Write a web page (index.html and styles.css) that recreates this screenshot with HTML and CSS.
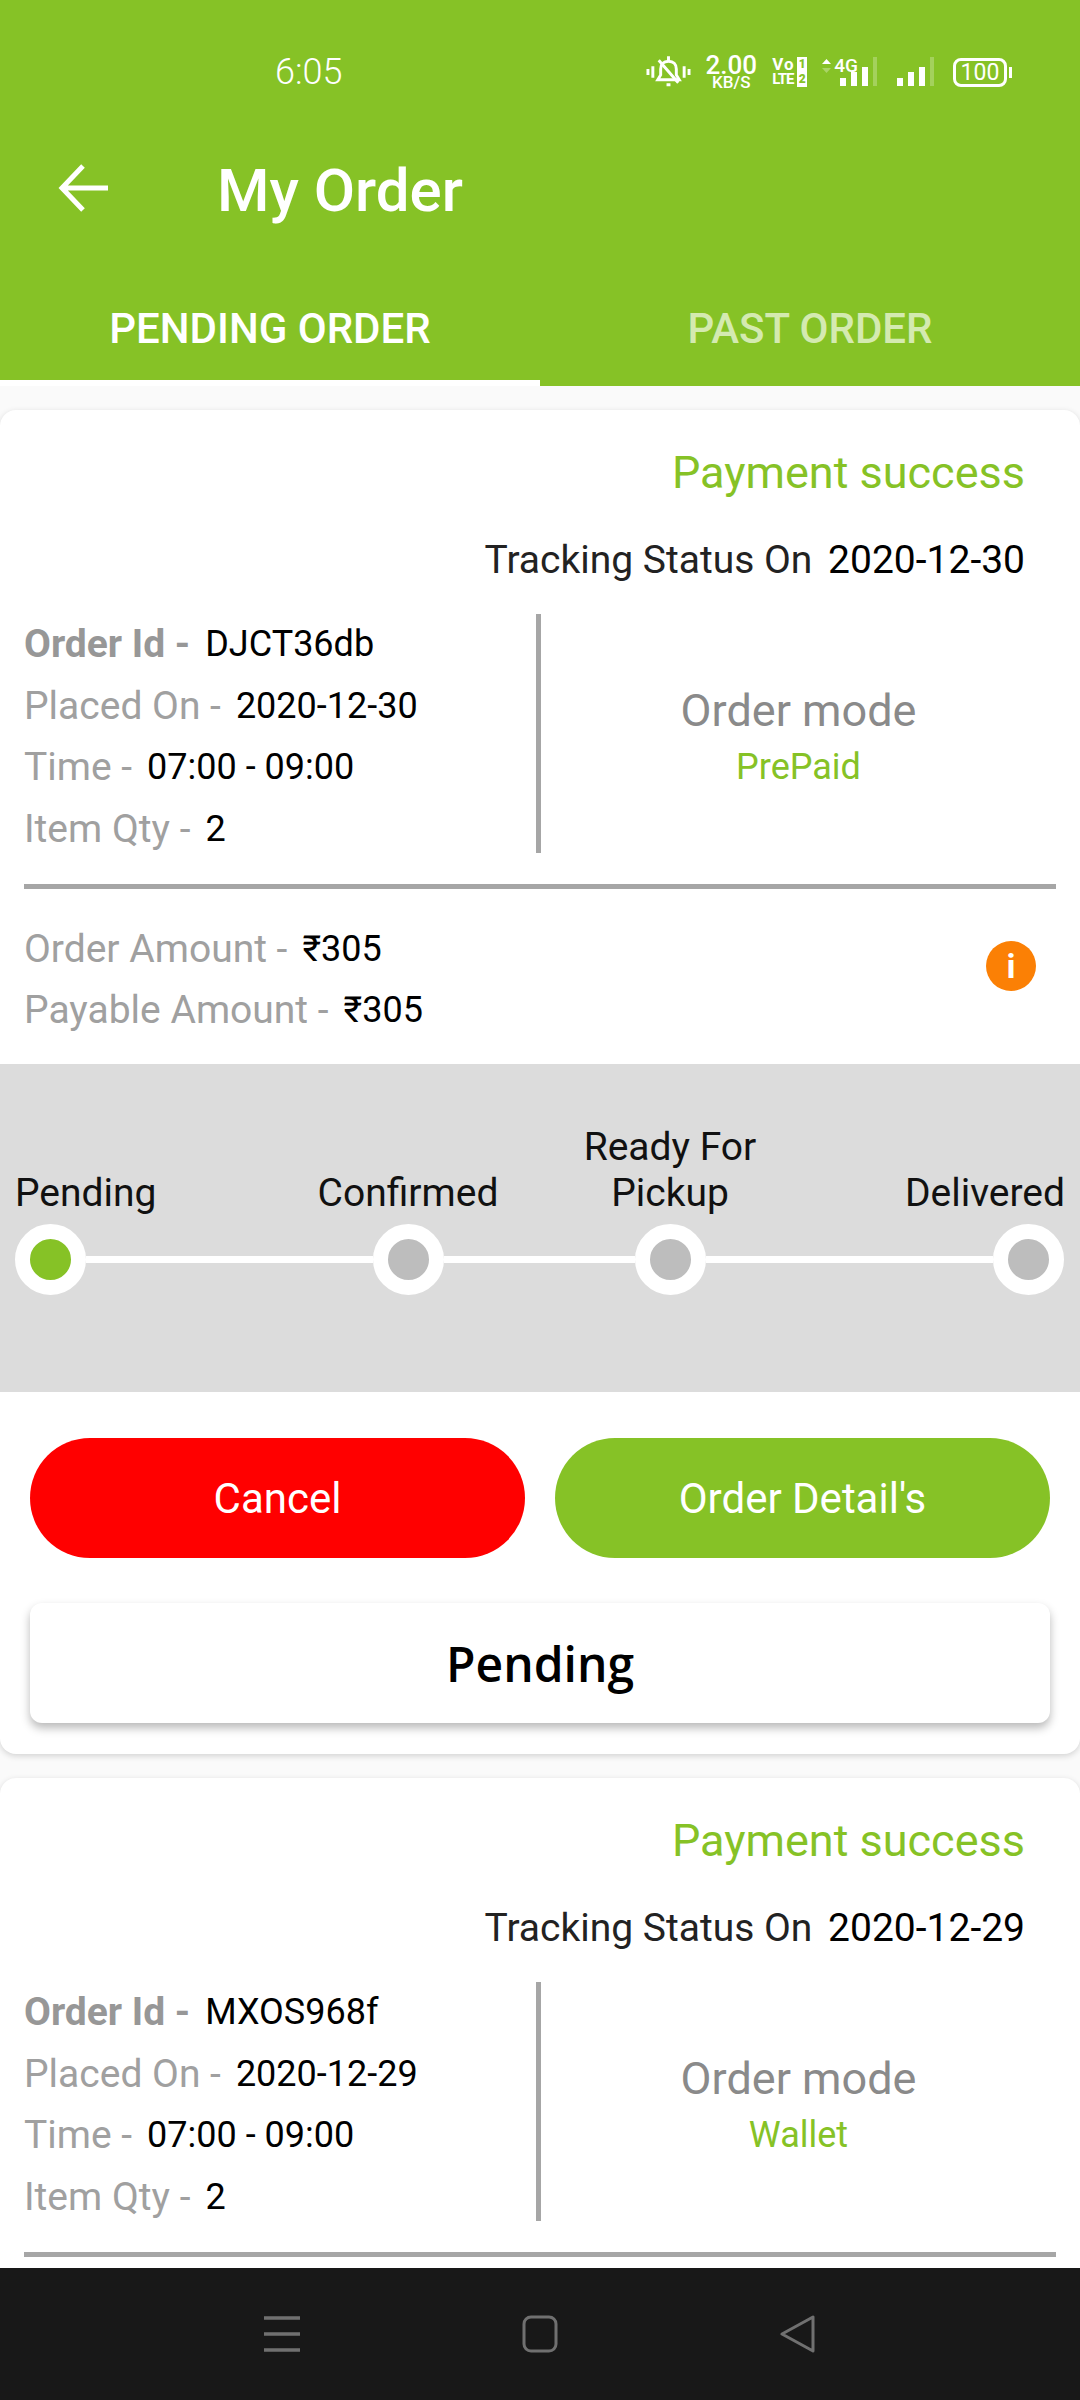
FILE: index.html
```html
<!DOCTYPE html>
<html lang="en">
<head>
    <meta charset="UTF-8">
    <meta name="viewport" content="width=device-width, initial-scale=1.0">
    <title>My Order</title>
    <link rel="stylesheet" href="styles.css">
</head>
<body>
    <header class="app-header">
        <div class="status-bar">
            <span class="clock">6:05</span>
            <div class="status-icons">
                <svg class="bell" width="45" height="32" viewBox="0 0 46 32" fill="none" stroke="#fff" stroke-width="3">
                    <path d="M2 13v6M7 10v12M39 10v12M44 13v6"/>
                    <path d="M12 24h22l-3-5v-6c0-5-3-8-8-8s-8 3-8 8v6z"/>
                    <path d="M23 0v5M21 29h4M13 4l20 23"/>
                </svg>
                <div class="net-speed">
                    <span class="net-value">2.00</span>
                    <span class="net-unit">KB/S</span>
                </div>
                <div class="volte">
                    <div class="volte-row"><span class="volte-vo">Vo</span><b>1</b></div>
                    <div class="volte-row"><span>LTE</span><b>2</b></div>
                </div>
                <div class="signal-first">
                    <svg class="net-arrow" width="9" height="14" viewBox="0 0 9 14" fill="#fff">
                        <path d="M4.5 0L9 5H0z"/>
                        <path d="M4.5 14L9 9H0z" opacity=".3"/>
                    </svg>
                    <span class="net-type">4G</span>
                    <svg width="38" height="30" viewBox="0 0 38 30" fill="#fff">
                        <path d="M0 21h6v8H0zM11 15h6v14h-6zM22 10h6v19h-6z"/>
                        <path d="M33 0h4v29h-4z" opacity=".25"/>
                    </svg>
                </div>
                <svg class="signal" width="38" height="30" viewBox="0 0 38 30" fill="#fff">
                    <path d="M0 21h6v8H0zM11 15h6v14h-6zM22 10h6v19h-6z"/>
                    <path d="M33 0h4v29h-4z" opacity=".25"/>
                </svg>
                <div class="battery">
                    <span class="battery-body">100</span>
                    <span class="battery-tip"></span>
                </div>
            </div>
        </div>
        <div class="toolbar">
            <svg class="back-icon" width="50" height="48" viewBox="0 0 50 48" fill="none" stroke="#fff" stroke-width="5">
                <path d="M50 24H5M25 2L4 24l21 22"/>
            </svg>
            <h1>My Order</h1>
        </div>
        <div class="tabs">
            <div class="tab active">PENDING ORDER</div>
            <div class="tab">PAST ORDER</div>
        </div>
    </header>

    <main class="order-list">
        <section class="order-card">
            <div class="payment-status">Payment success</div>
            <div class="tracking">Tracking Status On <span>2020-12-30</span></div>
            <div class="order-info">
                <div class="order-rows">
                    <div class="row"><span class="label strong">Order Id -</span><span class="value">DJCT36db</span></div>
                    <div class="row"><span class="label">Placed On -</span><span class="value">2020-12-30</span></div>
                    <div class="row"><span class="label">Time -</span><span class="value">07:00 - 09:00</span></div>
                    <div class="row"><span class="label">Item Qty -</span><span class="value">2</span></div>
                </div>
                <div class="order-mode">
                    <div class="mode-title">Order mode</div>
                    <div class="mode-value">PrePaid</div>
                </div>
            </div>
            <div class="amounts">
                <div>
                    <div class="row"><span class="label">Order Amount -</span><span class="value">₹305</span></div>
                    <div class="row"><span class="label">Payable Amount -</span><span class="value">₹305</span></div>
                </div>
                <div class="info-badge">i</div>
            </div>
            <div class="stepper">
                <div class="step-labels">
                    <span class="step-first">Pending</span>
                    <span>Confirmed</span>
                    <span>Ready For<br>Pickup</span>
                    <span class="step-last">Delivered</span>
                </div>
                <div class="rail">
                    <span class="node done"></span>
                    <span class="line line-long"></span>
                    <span class="node"></span>
                    <span class="line line-short"></span>
                    <span class="node"></span>
                    <span class="line line-long"></span>
                    <span class="node"></span>
                </div>
            </div>
            <div class="actions">
                <button class="btn btn-cancel">Cancel</button>
                <button class="btn btn-details">Order Detail's</button>
            </div>
            <div class="state-box">Pending</div>
        </section>

        <section class="order-card">
            <div class="payment-status">Payment success</div>
            <div class="tracking">Tracking Status On <span>2020-12-29</span></div>
            <div class="order-info">
                <div class="order-rows">
                    <div class="row"><span class="label strong">Order Id -</span><span class="value">MXOS968f</span></div>
                    <div class="row"><span class="label">Placed On -</span><span class="value">2020-12-29</span></div>
                    <div class="row"><span class="label">Time -</span><span class="value">07:00 - 09:00</span></div>
                    <div class="row"><span class="label">Item Qty -</span><span class="value">2</span></div>
                </div>
                <div class="order-mode">
                    <div class="mode-title">Order mode</div>
                    <div class="mode-value">Wallet</div>
                </div>
            </div>
            <div class="amounts"></div>
        </section>
    </main>

    <nav class="nav-bar">
        <svg width="40" height="38" viewBox="0 0 40 38" fill="none" stroke="#707070" stroke-width="3.5">
            <path d="M2 3h36M2 19h36M2 35h36"/>
        </svg>
        <svg width="40" height="38" viewBox="0 0 40 38" fill="none" stroke="#707070" stroke-width="3">
            <rect x="4" y="2" width="32" height="34" rx="7"/>
        </svg>
        <svg width="40" height="38" viewBox="0 0 40 38" fill="none" stroke="#707070" stroke-width="3" stroke-linejoin="round">
            <path d="M35 2v34L4 19z"/>
        </svg>
    </nav>
</body>
</html>
```

FILE: styles.css
```css
* {
    box-sizing: border-box;
}
body {
    margin: 0;
    height: 2400px;
    display: flex;
    flex-direction: column;
    overflow: hidden;
    background-color: #fafafa;
    font-family: Roboto, "Liberation Sans", sans-serif;
}
.app-header {
    background-color: #86c226;
    color: #fff;
    height: 386px;
    flex-shrink: 0;
}
.status-bar {
    height: 100px;
    padding: 48px 0 0 275px;
    display: flex;
    justify-content: space-between;
}
.clock {
    font-size: 36px;
    font-weight: 300;
    line-height: 48px;
}
.status-icons {
    display: flex;
    align-items: center;
    height: 48px;
    padding-right: 68px;
}
.bell {
    margin-right: 15px;
}
.net-speed {
    display: flex;
    flex-direction: column;
    align-items: center;
    width: 50px;
    margin-right: 16px;
    font-weight: 500;
}
.net-value {
    font-size: 26px;
    line-height: 20px;
}
.net-unit {
    font-size: 17px;
    line-height: 15px;
}
.volte {
    width: 35px;
    font-size: 15px;
    font-weight: 700;
    line-height: 15px;
    letter-spacing: -1px;
    margin-right: 15px;
}
.volte-row {
    display: flex;
    justify-content: space-between;
}
.volte-vo {
    font-size: 17px;
    letter-spacing: 1px;
}
.volte-row b {
    background-color: #fff;
    color: #86c226;
    font-size: 12px;
    letter-spacing: 0;
    width: 10px;
    text-align: center;
}
.signal-first {
    display: flex;
    align-items: flex-start;
    margin-right: 19px;
}
.net-arrow {
    margin: 2px 3px 0 0;
}
.net-type {
    font-size: 19px;
    font-weight: 500;
    line-height: 18px;
    margin-right: -18px;
}
svg.signal {
    margin-right: 18px;
}
.battery {
    display: flex;
    align-items: center;
}
.battery-body {
    width: 54px;
    height: 29px;
    border: 3px solid #fff;
    border-radius: 8px;
    font-size: 23px;
    line-height: 23px;
    text-align: center;
}
.battery-tip {
    width: 3px;
    height: 11px;
    background-color: #fff;
    margin-left: 2px;
}
.toolbar {
    height: 176px;
    display: flex;
    align-items: center;
    padding-left: 58px;
}
.toolbar h1 {
    margin: 0 0 0 109px;
    padding-top: 4px;
    font-size: 60px;
    font-weight: 500;
}
.tabs {
    display: flex;
    height: 110px;
}
.tab {
    width: 540px;
    height: 104px;
    display: flex;
    align-items: center;
    justify-content: center;
    font-size: 42px;
    font-weight: 500;
    color: #d4eab0;
}
.tab.active {
    color: #fff;
    height: 110px;
    border-bottom: 6px solid #fff;
}
.order-list {
    flex: 1;
    overflow: hidden;
    padding-top: 24px;
}
.order-card {
    background-color: #fff;
    border-radius: 16px;
    box-shadow: 0 2px 6px rgba(0, 0, 0, 0.16);
    margin-bottom: 24px;
    overflow: hidden;
}
.payment-status {
    font-size: 45px;
    color: #86c226;
    text-align: right;
    padding: 36px 55px 0 0;
    line-height: 54px;
}
.tracking {
    font-size: 39px;
    color: #222;
    text-align: right;
    padding: 35px 55px 0 0;
    line-height: 50px;
}
.tracking span {
    color: #000;
    margin-left: 6px;
}
.order-info {
    display: flex;
    margin: 29px 24px 0;
    padding-bottom: 31px;
    border-bottom: 5px solid #a6a6a6;
}
.order-rows {
    width: 512px;
    height: 239px;
    padding-top: 6px;
    display: flex;
    flex-direction: column;
    justify-content: center;
}
.row {
    display: flex;
    align-items: center;
    flex-shrink: 0;
    gap: 15px;
    height: 61.5px;
}
.label {
    font-size: 39px;
    color: #a0a0a0;
}
.label.strong {
    font-weight: 700;
    color: #979797;
}
.value {
    font-size: 36px;
    color: #000;
}
.order-mode {
    flex: 1;
    border-left: 5px solid #a6a6a6;
    display: flex;
    flex-direction: column;
    align-items: center;
    justify-content: center;
    padding-top: 11px;
}
.mode-title {
    font-size: 45px;
    color: #8a8a8a;
    line-height: 56px;
}
.mode-value {
    font-size: 36px;
    color: #86c226;
    line-height: 56px;
}
.amounts {
    display: flex;
    justify-content: space-between;
    align-items: flex-start;
    height: 175px;
    padding: 29px 44px 0 24px;
}
.info-badge {
    width: 50px;
    height: 50px;
    margin-top: 23px;
    border-radius: 50%;
    background-color: #fb8005;
    color: #fff;
    font-size: 34px;
    font-weight: 700;
    line-height: 50px;
    text-align: center;
}
.stepper {
    background-color: #dcdcdc;
    height: 328px;
    padding: 60px 15px 0;
}
.step-labels {
    display: grid;
    grid-template-columns: 273px 240px 284px 253px;
    align-items: end;
    text-align: center;
    font-size: 39px;
    line-height: 46px;
    color: #111;
}
.step-first {
    text-align: left;
}
.step-last {
    text-align: right;
}
.rail {
    display: flex;
    align-items: center;
    margin-top: 8px;
}
.node {
    width: 71px;
    height: 71px;
    flex-shrink: 0;
    border: 15px solid #fff;
    border-radius: 50%;
    background-color: #bdbdbd;
}
.node.done {
    background-color: #86c226;
}
.line {
    height: 7px;
    background-color: #fff;
}
.line-long {
    width: 287px;
}
.line-short {
    width: 191px;
}
.actions {
    display: flex;
    gap: 30px;
    padding: 46px 30px 0;
}
.btn {
    flex: 1;
    height: 120px;
    border: none;
    border-radius: 60px;
    color: #fff;
    font-family: Roboto, "Liberation Sans", sans-serif;
    font-size: 42px;
}
.btn-cancel {
    background-color: #ff0000;
}
.btn-details {
    background-color: #86c226;
}
.state-box {
    margin: 45px 30px 31px;
    height: 120px;
    border-radius: 12px;
    background-color: #fff;
    box-shadow: 0 5px 10px rgba(0, 0, 0, 0.28);
    font-family: "Open Sans", sans-serif;
    font-size: 48px;
    font-weight: 600;
    color: #000;
    display: flex;
    align-items: center;
    justify-content: center;
}
.nav-bar {
    height: 132px;
    flex-shrink: 0;
    background-color: #181818;
    display: flex;
    align-items: center;
    justify-content: center;
    gap: 218px;
}
```
